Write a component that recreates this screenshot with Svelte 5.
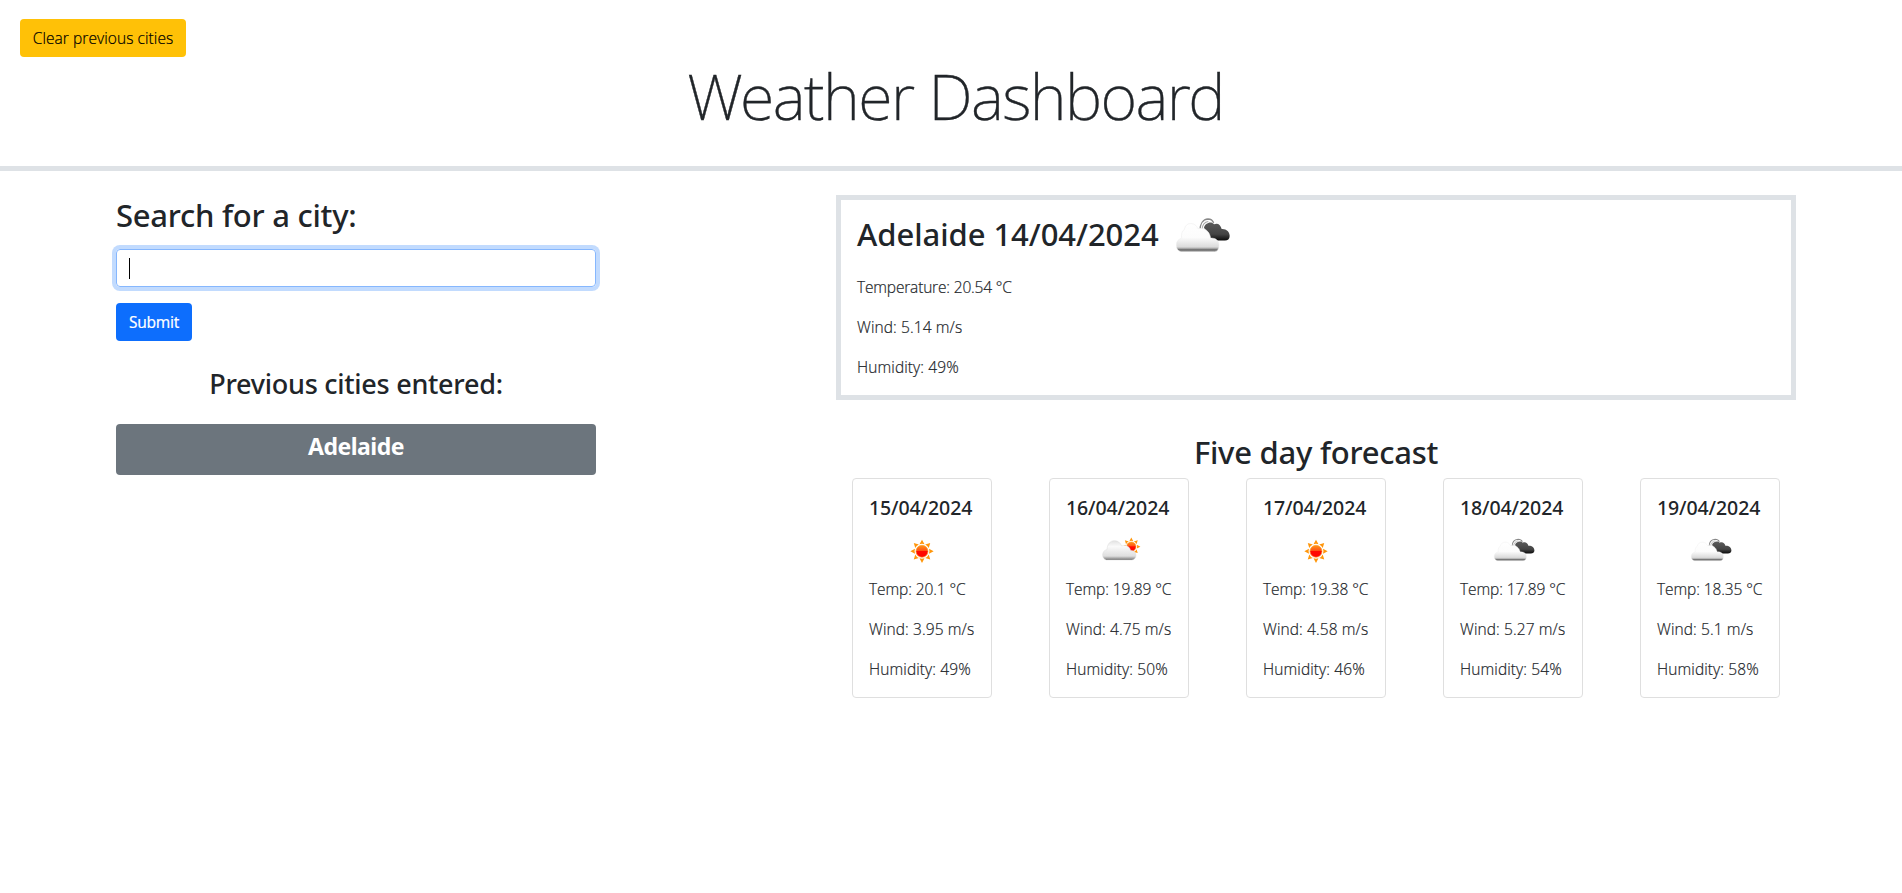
<script>
  const days = [
    { date: '15/04/2024', icon: 'sun', temp: '20.1', wind: '3.95', humidity: 49 },
    { date: '16/04/2024', icon: 'partly', temp: '19.89', wind: '4.75', humidity: 50 },
    { date: '17/04/2024', icon: 'sun', temp: '19.38', wind: '4.58', humidity: 46 },
    { date: '18/04/2024', icon: 'broken', temp: '17.89', wind: '5.27', humidity: 54 },
    { date: '19/04/2024', icon: 'broken', temp: '18.35', wind: '5.1', humidity: 58 }
  ];
  const rays = [0, 45, 90, 135, 180, 225, 270, 315];
</script>

{#snippet brokenClouds()}
  <path d="M105 74 C105 55 114 42 129 41 C138 41 143 45 146 52" fill="none" stroke="#888" stroke-width="4" />
  <path d="M111 72 C112 58 119 49 130 48" fill="none" stroke="#a8a8a8" stroke-width="3" />
  <path d="M117 66 C119 54 138 45 147 56 C158 51 167 57 170 70 C184 69 194 78 194 90 C194 99 188 103 180 103 L140 103 Z" fill="url(#dark)" />
  <path d="M48 135 C38 133 34 126 34 116 C34 106 40 99 50 96 C48 88 50 76 58 71 C60 60 67 54 77 54 C88 54 95 60 99 69 C118 64 134 76 137 96 C152 95 162 103 162 117 C162 128 157 134 149 135 Z" fill="url(#light)" stroke="#ececec" stroke-width="1.5" />
{/snippet}

{#snippet sun()}
  {#each rays as angle}
    <path d="M-7.5 -21 L0 -35 L7.5 -21 Q0 -24 -7.5 -21 Z" fill="#ff960a" transform={`rotate(${angle})`} />
  {/each}
  <circle r="18" fill="url(#sunfill)" stroke="#ff9d26" stroke-width="2" />
{/snippet}

<svg class="defs" aria-hidden="true">
  <defs>
    <linearGradient id="dark" x1="0" y1="0" x2="0" y2="1">
      <stop offset="0" stop-color="#5c5c5c" /><stop offset=".65" stop-color="#444" /><stop offset="1" stop-color="#0c0c0c" />
    </linearGradient>
    <linearGradient id="light" x1="0" y1="0" x2="0" y2="1">
      <stop offset="0" stop-color="#fff" /><stop offset=".5" stop-color="#fcfcfc" /><stop offset=".82" stop-color="#dcdcdc" />
      <stop offset=".88" stop-color="#b8b8b8" /><stop offset=".91" stop-color="#747474" /><stop offset="1" stop-color="#858585" />
    </linearGradient>
    <linearGradient id="pale" x1="0" y1="0" x2="0" y2="1">
      <stop offset="0" stop-color="#e2e2e2" /><stop offset=".3" stop-color="#fafafa" /><stop offset=".8" stop-color="#dedede" />
      <stop offset=".92" stop-color="#a0a0a0" /><stop offset="1" stop-color="#6c6c6c" />
    </linearGradient>
    <linearGradient id="sunfill" x1="0" y1="0" x2="0" y2="1">
      <stop offset="0" stop-color="#ff9418" /><stop offset=".45" stop-color="#ff5214" /><stop offset=".5" stop-color="#ff0a00" />
      <stop offset="1" stop-color="#ff0500" />
    </linearGradient>
  </defs>
</svg>

<header>
  <button class="btn warning">Clear previous cities</button>
  <h1>Weather Dashboard</h1>
</header>

<main>
  <section class="search">
    <h2>Search for a city:</h2>
    <div class="field" role="textbox" aria-label="City" tabindex="0"><span class="caret"></span></div>
    <button class="btn primary">Submit</button>
    <h3>Previous cities entered:</h3>
    <button class="city">Adelaide</button>
  </section>

  <section class="weather">
    <article class="current">
      <div class="title">
        <h2 class="now">Adelaide 14/04/2024</h2>
        <svg class="now-icon" width="54" height="34" viewBox="33 38 162 98" preserveAspectRatio="none">{@render brokenClouds()}</svg>
      </div>
      <p class="long">Temperature: 20.54 °C</p>
      <p>Wind: 5.14 m/s</p>
      <p>Humidity: 49%</p>
    </article>

    <h2 class="forecast-title">Five day forecast</h2>
    <div class="cards">
      {#each days as day}
        <article class="card">
          <h5>{day.date}</h5>
          <svg class="icon" width="50" height="50" viewBox="0 0 50 50">
            {#if day.icon === 'sun'}
              <g transform="translate(25 24.3) scale(.333)">{@render sun()}</g>
            {:else if day.icon === 'partly'}
              <g transform="translate(1 3) scale(.333)">
                <g transform="translate(109 50) scale(.78)">{@render sun()}</g>
                <path d="M34 90 C27 88 23 82 23 75 C23 66 28 60 36 59 C37 43 45 32 58 32 C69 32 76 38 80 48 C93 43 104 49 107 61 C116 62 123 67 123 76 C123 84 118 89 111 90 Z" fill="url(#pale)" stroke="#d4d4d4" stroke-width="1.2" />
              </g>
            {:else}
              <g transform="translate(6 12) scale(.251 .229) translate(-33 -40)">{@render brokenClouds()}</g>
            {/if}
          </svg>
          <p class="temp">Temp: {day.temp} °C</p>
          <p>Wind: {day.wind} m/s</p>
          <p>Humidity: {day.humidity}%</p>
        </article>
      {/each}
    </div>
  </section>
</main>

<style>
  :global(body) {
    margin: 0;
    background: #fff;
    color: #212529;
    font: 300 15.5px/24px "Open Sans", "Noto Sans", sans-serif;
  }
  h1, h2, h3, h5, p { margin: 0; }
  h1, h2, h3, h5, .city, .primary { font-family: "Noto Sans", "Open Sans", sans-serif; }
  .defs { position: absolute; width: 0; height: 0; }
  header {
    box-sizing: border-box;
    height: 171px;
    padding-top: 19px;
    border-bottom: 5px solid #dee2e6;
  }
  .btn {
    display: block;
    height: 38px;
    padding: 0;
    border: 0;
    border-radius: 4px;
    font-size: 15.5px;
    line-height: 38px;
  }
  .warning {
    width: 166px;
    margin-left: 20px;
    background: #ffc107;
    color: #000;
    font-family: inherit;
    font-weight: 300;
    letter-spacing: .07px;
    -webkit-text-stroke: .2px #000;
  }
  h1 {
    padding: 1px 0 0 9px;
    font-size: 63px;
    font-weight: 200;
    line-height: 76px;
    letter-spacing: -1.55px;
    text-align: center;
    -webkit-text-stroke: .4px #212529;
  }
  main {
    display: flex;
    justify-content: space-between;
    padding: 24px 106px 0 116px;
  }
  .search { width: 480px; }
  h2 {
    font-size: 31px;
    font-weight: 500;
    line-height: 38px;
    letter-spacing: -.25px;
  }
  .search h2 { margin: 1px 0 15px; }
  .field {
    box-sizing: border-box;
    display: flex;
    align-items: center;
    height: 38px;
    padding-left: 12px;
    border: 1px solid #86b7fe;
    border-radius: 4px;
    box-shadow: 0 0 0 4px rgba(13, 110, 253, .25);
    outline: 0;
  }
  .caret { width: 1px; height: 21px; background: #000; }
  .primary {
    width: 76px;
    margin-top: 16px;
    background: #0d6efd;
    color: #fff;
    font-weight: 400;
    letter-spacing: -.3px;
    -webkit-text-stroke: .15px #fff;
  }
  h3 {
    margin: 26px 0 23px;
    font-size: 27px;
    font-weight: 500;
    line-height: 34px;
    letter-spacing: -.27px;
    text-align: center;
  }
  .city {
    display: flex;
    justify-content: center;
    align-items: flex-start;
    width: 100%;
    height: 51px;
    padding: 8px 0 0;
    border: 0;
    border-radius: 4px;
    background: #6c757d;
    color: #fff;
    font-size: 23px;
    font-weight: 700;
    line-height: 29px;
    letter-spacing: -.5px;
  }
  .weather { width: 960px; }
  .current {
    box-sizing: border-box;
    height: 205px;
    padding: 0 16px;
    border: 5px solid #dee2e6;
  }
  .title {
    display: flex;
    align-items: center;
    gap: 17px;
    height: 68px;
    margin-bottom: 7px;
  }
  .now { letter-spacing: -.05px; }
  .now-icon { margin-top: 1px; }
  .current p, .card p {
    margin-bottom: 16px;
    letter-spacing: .1px;
    white-space: nowrap;
    -webkit-text-stroke: .2px #212529;
  }
  .current .long { letter-spacing: -.17px; }
  .card .temp { letter-spacing: -.1px; }
  .forecast-title { margin: 33px 0 7px; text-align: center; }
  .cards {
    display: flex;
    justify-content: space-between;
    padding: 0 16px;
  }
  .card {
    box-sizing: border-box;
    width: 140px;
    height: 220px;
    padding: 17px 16px 0;
    border: 1px solid #dfdfdf;
    border-radius: 4px;
  }
  h5 {
    margin-bottom: 7px;
    font-size: 19.5px;
    font-weight: 500;
    line-height: 24px;
    letter-spacing: -.1px;
    white-space: nowrap;
  }
  .icon { display: block; margin: 0 auto; }
</style>
